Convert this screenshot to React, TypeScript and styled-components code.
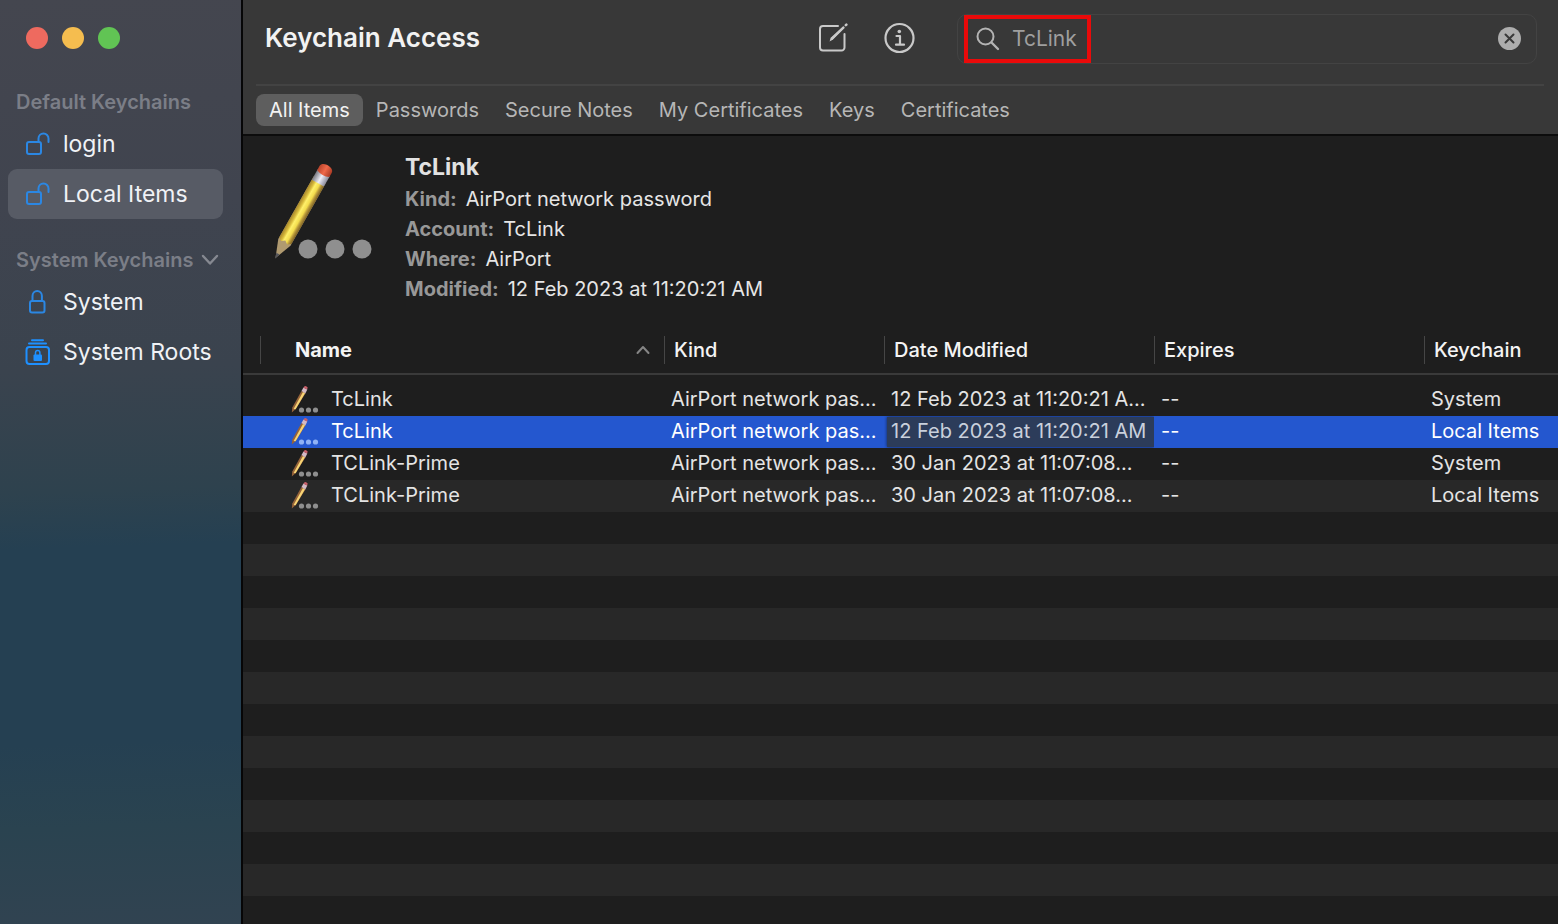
import React from "react";
import styled, { createGlobalStyle, css } from "styled-components";

const GlobalStyle = createGlobalStyle`
  *, *::before, *::after { box-sizing: border-box; }
  body {
    margin: 0;
    background: #1e1e1e;
    color: #e6e6e6;
    font-family: Inter, "Liberation Sans", sans-serif;
    font-size: 20px;
    line-height: 24px;
  }
  button, input { font: inherit; color: inherit; }
  button { border: 0; padding: 0; background: none; cursor: pointer; }
  h1, h2, dl, dd, dt, ul { margin: 0; padding: 0; }
  svg { display: block; flex: none; }
`;

const Window = styled.div`
  display: flex;
  min-height: 100vh;
`;

const Sidebar = styled.aside`
  flex: none;
  width: 243px;
  padding: 27px 18px 24px 8px;
  border-right: 2px solid #060607;
  background: linear-gradient(178deg, #44464f 0%, #40444f 22%, #3a434e 40%, #2e424e 53%, #254052 59%, #254052 80%, #2a4350 89%, #314351 100%);
`;

const TrafficLights = styled.div`
  display: flex;
  gap: 14px;
  padding-left: 18px;
  margin-bottom: 39px;
`;

const Light = styled.button<{ $color: string }>`
  width: 22px;
  height: 22px;
  border-radius: 50%;
  background: ${(p) => p.$color};
`;

const SectionTitle = styled.h2`
  display: flex;
  align-items: center;
  gap: 8px;
  height: 28px;
  margin-bottom: 3px;
  padding-left: 8px;
  font-size: 20px;
  font-weight: 600;
  color: #7b7e87;
  white-space: nowrap;
`;

const KeychainList = styled.ul`
  list-style: none;
  margin-bottom: 27px;
`;

const KeychainButton = styled.button<{ $active?: boolean }>`
  display: flex;
  align-items: center;
  gap: 12px;
  width: 100%;
  height: 50px;
  padding-left: 17px;
  border-radius: 9px;
  font-size: 23px;
  color: #f0f2f6;
  white-space: nowrap;
  background: ${(p) => (p.$active ? "#575b65" : "transparent")};
`;

const Main = styled.main`
  flex: 1;
  min-width: 0;
  display: flex;
  flex-direction: column;
`;

const Header = styled.header`
  background: #383838;
  border-bottom: 2px solid #0c0c0c;
`;

const Toolbar = styled.div`
  display: flex;
  align-items: center;
  height: 84px;
  padding: 0 21px 8px 22px;
`;

const Title = styled.h1`
  flex: 1;
  font-size: 26px;
  line-height: 32px;
  font-weight: 600;
  color: #f2f2f2;
  white-space: nowrap;
`;

const Tools = styled.div`
  display: flex;
  gap: 34px;
  margin-right: 41px;
  color: #c9c9c9;
`;

const SearchField = styled.div`
  position: relative;
  display: flex;
  align-items: center;
  gap: 12px;
  width: 580px;
  height: 50px;
  margin-top: 2px;
  padding: 0 15px 0 18px;
  border: 1px solid #434343;
  border-radius: 10px;
  color: #b4b4b4;
`;

const SearchInput = styled.input`
  flex: 1;
  min-width: 0;
  padding: 0;
  border: 0;
  outline: 0;
  background: transparent;
  font-size: 21px;
  color: #9f9f9f;
`;

const Highlight = styled.span`
  position: absolute;
  left: 6px;
  top: 0;
  width: 127px;
  height: 48px;
  border: 4px solid #ea0a0a;
  pointer-events: none;
`;

const Tabs = styled.nav`
  display: flex;
  align-items: center;
  height: 50px;
  margin: 0 14px 0 13px;
  border-top: 2px solid #434343;
`;

const Tab = styled.button<{ $active?: boolean }>`
  height: 32px;
  padding: 0 13px;
  border-radius: 8px;
  font-size: 20px;
  white-space: nowrap;
  color: ${(p) => (p.$active ? "#f2f2f2" : "#b6b6b6")};
  background: ${(p) => (p.$active ? "#5e5e5e" : "transparent")};
`;

const Details = styled.section`
  display: flex;
  gap: 32px;
  padding: 15px 30px 22px;
`;

const Artwork = styled.div`
  flex: none;
  padding-top: 9px;
`;

const DetailTitle = styled.h2`
  margin-bottom: 1px;
  font-size: 23px;
  line-height: 32px;
  font-weight: 700;
  color: #e2e2e2;
`;

const DetailRow = styled.div`
  display: flex;
  gap: 9px;
  line-height: 30px;
  dt { font-weight: 700; color: #989898; }
  dd { color: #e6e6e6; }
`;

const Table = styled.table`
  width: 100%;
  table-layout: fixed;
  border-collapse: separate;
  border-spacing: 0;
`;

const Col = styled.col<{ $width?: number }>`
  ${(p) => p.$width && css`width: ${p.$width}px;`}
`;

const HeadCell = styled.th<{ $strong?: boolean }>`
  height: 49px;
  padding: 0;
  border-bottom: 2px solid #3a3a3a;
  text-align: left;
  font-weight: ${(p) => (p.$strong ? 700 : 500)};
  color: #f4f4f4;
  white-space: nowrap;
`;

const HeadLabel = styled.div<{ $indent?: boolean }>`
  display: flex;
  align-items: center;
  justify-content: space-between;
  height: 28px;
  padding: 0 14px 0 ${(p) => (p.$indent ? 34 : 9)}px;
  border-left: 1px solid #464646;
`;

const Spacer = styled.tr`
  height: 9px;
  td { padding: 0; }
`;

const Row = styled.tr<{ $selected?: boolean; $striped?: boolean }>`
  height: 32px;
  color: ${(p) => (p.$selected ? "#ffffff" : "#e4e4e4")};
  background: ${(p) => (p.$selected ? "#2457cf" : p.$striped ? "#282828" : "transparent")};
`;

const Cell = styled.td`
  position: relative;
  height: 32px;
  padding: 0 4px 2px 7px;
  overflow: hidden;
  white-space: nowrap;
`;

const NameCell = styled.div`
  display: flex;
  align-items: center;
  gap: 12px;
  padding-left: 24px;
`;

const FullDate = styled.span`
  position: absolute;
  inset: 1px 0 1px 3px;
  padding: 2px 0 0 4px;
  background: #2c3c5a;
  box-shadow: 0 0 3px #14224a;
  color: #c9d0dc;
`;

const EmptyRows = styled.div`
  flex: 1;
  background: repeating-linear-gradient(#1e1e1e 0 32px, #282828 32px 64px);
`;

const UnlockedIcon = () => (
  <svg width="26" height="26" viewBox="0 0 26 26" fill="none" stroke="#2b87e3" strokeWidth="2" strokeLinecap="round">
    <rect x="2" y="11" width="14" height="12" rx="2" />
    <path d="M13.500 11V7.500a5 5 0 0 1 10 0V11" />
  </svg>
);

const LockedIcon = () => (
  <svg width="26" height="26" viewBox="0 0 26 26" fill="none" stroke="#2b87e3" strokeWidth="2" strokeLinecap="round">
    <rect x="5" y="12" width="14.500" height="11.500" rx="2" />
    <path d="M7.500 12V7a4.700 5 0 0 1 9.400 0v5" />
  </svg>
);

const RootsIcon = () => (
  <svg width="26" height="28" viewBox="0 0 26 28" fill="none" stroke="#1e90ff" strokeWidth="2" strokeLinecap="round">
    <path d="M7 2.200H18M4 5.600H21" />
    <rect x="1.500" y="9" width="22.500" height="17" rx="3" />
    <rect x="8.500" y="16.500" width="8.500" height="6.500" rx="1" fill="#1e90ff" stroke="none" />
    <path d="M10.500 17v-2.200a2.200 2.200 0 0 1 4.400 0V17" strokeWidth="1.500" />
  </svg>
);

const ChevronDown = () => (
  <svg width="18" height="12" viewBox="0 0 18 12" fill="none" stroke="#868991" strokeWidth="2.400" strokeLinecap="round" strokeLinejoin="round">
    <path d="M2 2l7 7.500L16 2" />
  </svg>
);

const SortUp = () => (
  <svg width="14" height="10" viewBox="0 0 14 10" fill="none" stroke="#858585" strokeWidth="2" strokeLinecap="round" strokeLinejoin="round">
    <path d="M1.500 8L7 2l5.500 6" />
  </svg>
);

const ComposeIcon = () => (
  <svg width="32" height="32" viewBox="0 0 32 32" fill="none" stroke="currentColor" strokeWidth="2" strokeLinecap="round" strokeLinejoin="round">
    <path d="M20 4H5a3 3 0 0 0-3 3v18.500a3 3 0 0 0 3 3h18.500a3 3 0 0 0 3-3V12" />
    <path d="M11.500 19.500L13 15.500 25 4.500l1.500 1.500L15 17.500z" fill="currentColor" stroke="none" />
    <path d="M13.500 17L25.500 5.500" strokeWidth="2.200" />
    <path d="M27.800 3.200l.6-.6" strokeWidth="2.600" />
  </svg>
);

const InfoIcon = () => (
  <svg width="32" height="32" viewBox="0 0 32 32" fill="none" stroke="currentColor" strokeWidth="2.200" strokeLinecap="round" strokeLinejoin="round">
    <circle cx="15.500" cy="16" r="14" />
    <circle cx="15.300" cy="9.500" r="1.800" fill="currentColor" stroke="none" />
    <path d="M12.500 14H16v8.500M12 22.700h8" />
  </svg>
);

const SearchIcon = () => (
  <svg width="24" height="24" viewBox="0 0 24 24" fill="none" stroke="currentColor" strokeWidth="2" strokeLinecap="round">
    <circle cx="9.500" cy="9.500" r="8" />
    <path d="M15.500 15.500l6.500 6.500" strokeWidth="2.400" />
  </svg>
);

const ClearIcon = () => (
  <svg width="24" height="24" viewBox="0 0 24 24">
    <circle cx="12.500" cy="11.500" r="11.500" fill="#adadad" />
    <path d="M8.500 7.500l8 8M16.500 7.500l-8 8" stroke="#383838" strokeWidth="2" strokeLinecap="round" />
  </svg>
);

const PencilIcon = () => (
  <svg width="100" height="102" viewBox="0 0 100 102">
    <defs>
      <linearGradient id="wood" x1="0" x2="1">
        <stop offset="0" stopColor="#a5852c" />
        <stop offset="0.250" stopColor="#d9bb3c" />
        <stop offset="0.400" stopColor="#fff06a" />
        <stop offset="0.650" stopColor="#f3dc4d" />
        <stop offset="0.800" stopColor="#b8983a" />
        <stop offset="1" stopColor="#7c6124" />
      </linearGradient>
      <linearGradient id="metal" x1="0" x2="1">
        <stop offset="0" stopColor="#77777f" />
        <stop offset="0.500" stopColor="#eeeef8" />
        <stop offset="1" stopColor="#8b8b9a" />
      </linearGradient>
      <linearGradient id="eraser" x1="0" x2="1">
        <stop offset="0" stopColor="#b8442c" />
        <stop offset="0.500" stopColor="#f0694a" />
        <stop offset="1" stopColor="#a93a24" />
      </linearGradient>
    </defs>
    <g transform="translate(2.500 98) rotate(29.500)">
      <path d="M-7-86h14V-18L0 0l-7-18z" fill="#b09a70" />
      <path d="M-7-90h14V-20l-3.500 2.500L0-20l-3.500 2.500L-7-20z" fill="url(#wood)" />
      <path d="M-1.800-5h3.600L0 1z" fill="#55565c" />
      <rect x="-7" y="-98" width="14" height="12" fill="url(#metal)" />
      <path d="M-7-97v-5c0-6 14-6 14 0v5q-7 3-14 0z" fill="url(#eraser)" />
    </g>
    <g fill="#8f8f8f">
      <circle cx="35" cy="89" r="9.500" />
      <circle cx="62" cy="89" r="9.500" />
      <circle cx="89" cy="89" r="9.500" />
    </g>
  </svg>
);

const SmallPencilIcon = ({ dots }: { dots: string }) => (
  <svg width="28" height="28" viewBox="0 0 28 28">
    <path d="M.8 27.500L1.300 22.500 10.500 6l4 2.200L4.800 24z" fill="#96633a" />
    <path d="M2.600 24L12 7l2 1.200L4.600 24.200z" fill="#f7d474" />
    <path d="M10.500 6l2-3.500 3.800 2-2 4z" fill="#d3b9c4" />
    <path d="M12.500 2.800l1-1.600q1.800-.6 3.200 1.400l-.6 1.900z" fill="#c8606a" />
    <g fill={dots}>
      <circle cx="10.500" cy="25" r="2.600" />
      <circle cx="17.500" cy="25" r="2.600" />
      <circle cx="24.500" cy="25" r="2.600" />
    </g>
  </svg>
);

const tabs = ["All Items", "Passwords", "Secure Notes", "My Certificates", "Keys", "Certificates"];

const details = [
  ["Kind:", "AirPort network password"],
  ["Account:", "TcLink"],
  ["Where:", "AirPort"],
  ["Modified:", "12 Feb 2023 at 11:20:21 AM"],
];

const items = [
  { name: "TcLink", date: "12 Feb 2023 at 11:20:21 A...", keychain: "System" },
  { name: "TcLink", date: "12 Feb 2023 at 11:20:21 AM", keychain: "Local Items", selected: true },
  { name: "TCLink-Prime", date: "30 Jan 2023 at 11:07:08...", keychain: "System" },
  { name: "TCLink-Prime", date: "30 Jan 2023 at 11:07:08...", keychain: "Local Items" },
];

export default function App() {
  return (
    <>
      <GlobalStyle />
      <Window>
        <Sidebar>
          <TrafficLights>
            <Light $color="#ee6a5f" aria-label="Close" />
            <Light $color="#f5bd4f" aria-label="Minimise" />
            <Light $color="#61c454" aria-label="Zoom" />
          </TrafficLights>
          <SectionTitle>Default Keychains</SectionTitle>
          <KeychainList>
            <li><KeychainButton><UnlockedIcon />login</KeychainButton></li>
            <li><KeychainButton $active><UnlockedIcon />Local Items</KeychainButton></li>
          </KeychainList>
          <SectionTitle>System Keychains <ChevronDown /></SectionTitle>
          <KeychainList>
            <li><KeychainButton><LockedIcon />System</KeychainButton></li>
            <li><KeychainButton><RootsIcon />System Roots</KeychainButton></li>
          </KeychainList>
        </Sidebar>
        <Main>
          <Header>
            <Toolbar>
              <Title>Keychain Access</Title>
              <Tools>
                <button aria-label="New item"><ComposeIcon /></button>
                <button aria-label="Item info"><InfoIcon /></button>
              </Tools>
              <SearchField>
                <SearchIcon />
                <SearchInput aria-label="Search" defaultValue="TcLink" />
                <button aria-label="Clear search"><ClearIcon /></button>
                <Highlight />
              </SearchField>
            </Toolbar>
            <Tabs>
              {tabs.map((tab, i) => (
                <Tab key={tab} $active={i === 0}>{tab}</Tab>
              ))}
            </Tabs>
          </Header>
          <Details>
            <Artwork><PencilIcon /></Artwork>
            <div>
              <DetailTitle>TcLink</DetailTitle>
              <dl>
                {details.map(([label, value]) => (
                  <DetailRow key={label}><dt>{label}</dt><dd>{value}</dd></DetailRow>
                ))}
              </dl>
            </div>
          </Details>
          <Table>
            <colgroup>
              <Col $width={17} />
              <Col />
              <Col $width={220} />
              <Col $width={270} />
              <Col $width={270} />
              <Col $width={134} />
            </colgroup>
            <thead>
              <tr>
                <HeadCell as="td" />
                <HeadCell scope="col" $strong><HeadLabel $indent>Name <SortUp /></HeadLabel></HeadCell>
                <HeadCell scope="col"><HeadLabel>Kind</HeadLabel></HeadCell>
                <HeadCell scope="col"><HeadLabel>Date Modified</HeadLabel></HeadCell>
                <HeadCell scope="col"><HeadLabel>Expires</HeadLabel></HeadCell>
                <HeadCell scope="col"><HeadLabel>Keychain</HeadLabel></HeadCell>
              </tr>
            </thead>
            <tbody>
              <Spacer><td colSpan={6} /></Spacer>
              {items.map((item, i) => (
                <Row key={i} $selected={item.selected} $striped={i % 2 === 1}>
                  <Cell />
                  <Cell>
                    <NameCell>
                      <SmallPencilIcon dots={item.selected ? "#8fb2f5" : "#8f8f8f"} />
                      {item.name}
                    </NameCell>
                  </Cell>
                  <Cell>AirPort network pas...</Cell>
                  <Cell>{item.selected ? <FullDate>{item.date}</FullDate> : item.date}</Cell>
                  <Cell>--</Cell>
                  <Cell>{item.keychain}</Cell>
                </Row>
              ))}
            </tbody>
          </Table>
          <EmptyRows />
        </Main>
      </Window>
    </>
  );
}
